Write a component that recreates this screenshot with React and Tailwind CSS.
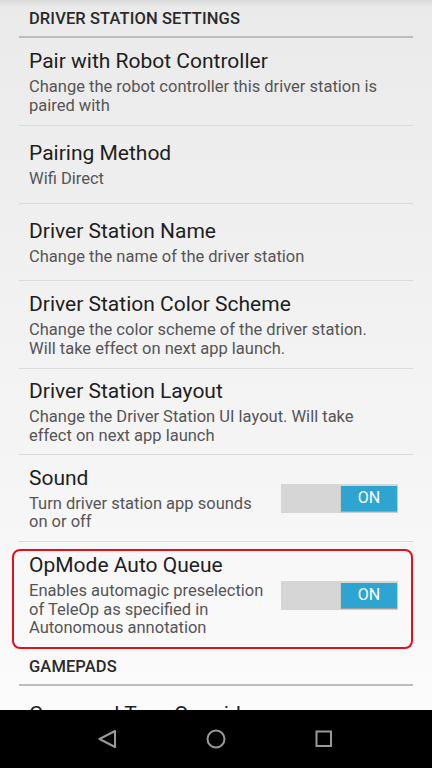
import React from "react";

const font = { fontFamily: "Roboto, 'Noto Sans', 'Liberation Sans', sans-serif" };

function Header({ children }) {
  return (
    <div className="mx-[19px] h-[38px] border-b-2 border-[#bdbdbd] pl-[10px] pt-[9px]">
      <div className="text-[16.5px] leading-[20px] font-medium text-[#2a2a2a] tracking-[0.1px]">{children}</div>
    </div>
  );
}

function Toggle() {
  return (
    <div className="flex h-[29px] w-[117px] shrink-0 items-center justify-end bg-[#d6d6d6] pr-[1px]">
      <div className="flex h-[25px] w-[56px] items-center justify-center bg-[#2ea5d1] text-[16px] leading-none text-white shadow-[0_1px_1px_rgba(0,0,0,0.25)]">
        ON
      </div>
    </div>
  );
}

function Row({ title, sub, toggle, last, h, subW = "w-[360px]" }) {
  return (
    <div className={`mx-[19px] flex items-center ${last ? "" : "border-b border-[#dcdcdc]"} ${h} pl-[10px] pr-[15px]`}>
      <div className={`flex flex-col ${subW}`}>
        <div className="text-[21px] leading-[26px] text-[#1e1e1e]">{title}</div>
        {sub && <div className="mt-[4px] text-[16.5px] leading-[18.5px] text-[#555555]">{sub}</div>}
      </div>
      {toggle && (
        <div className="ml-auto">
          <Toggle />
        </div>
      )}
    </div>
  );
}

export default function App() {
  return (
    <div style={font} className="flex h-[768px] w-[432px] flex-col overflow-hidden bg-black">
      <div className="relative flex-1 overflow-hidden bg-gradient-to-b from-[#eaeaea] to-[#fbfbfb]">
        <div className="pointer-events-none absolute inset-x-0 top-0 h-[7px] bg-gradient-to-b from-[#d9d9d9] to-transparent" />
        <Header>DRIVER STATION SETTINGS</Header>
        <Row h="h-[88px]" title="Pair with Robot Controller" sub="Change the robot controller this driver station is paired with" />
        <Row h="h-[78px]" title="Pairing Method" sub="Wifi Direct" />
        <Row h="h-[77px]" title="Driver Station Name" sub="Change the name of the driver station" />
        <Row h="h-[88px]" title="Driver Station Color Scheme" sub="Change the color scheme of the driver station. Will take effect on next app launch." />
        <Row h="h-[86px]" title="Driver Station Layout" sub="Change the Driver Station UI layout. Will take effect on next app launch" />
        <Row h="h-[87px]" title="Sound" sub="Turn driver station app sounds on or off" toggle subW="w-[240px]" />
        <div className="relative">
          <Row h="h-[106px]" title="OpMode Auto Queue" sub="Enables automagic preselection of TeleOp as specified in Autonomous annotation" toggle last subW="w-[240px]" />
          <div className="pointer-events-none absolute left-[12px] right-[19px] top-[7px] bottom-[-1px] rounded-[8px] border-2 border-[#e3101b]" />
        </div>
        <Header>GAMEPADS</Header>
        <div className="mx-[19px] pl-[10px] pt-[15px]">
          <div className="text-[21px] leading-[26px] text-[#1e1e1e]">Gamepad Type Overrides</div>
        </div>
      </div>
      <div className="flex h-[58px] shrink-0 items-center justify-center bg-black">
        <div className="flex w-[108px] justify-center">
          <svg width="20" height="20" viewBox="0 0 20 20">
            <path d="M17 2 L1.5 10 L17 18 Z" fill="none" stroke="#9a9a9a" strokeWidth="2" strokeLinejoin="round" />
          </svg>
        </div>
        <div className="flex w-[108px] justify-center">
          <svg width="22" height="22" viewBox="0 0 22 22">
            <circle cx="11" cy="11" r="8.5" fill="none" stroke="#9a9a9a" strokeWidth="2" />
          </svg>
        </div>
        <div className="flex w-[108px] justify-center">
          <svg width="18" height="18" viewBox="0 0 18 18">
            <rect x="1.5" y="1.5" width="14.5" height="14.5" fill="none" stroke="#9a9a9a" strokeWidth="2" />
          </svg>
        </div>
      </div>
    </div>
  );
}
